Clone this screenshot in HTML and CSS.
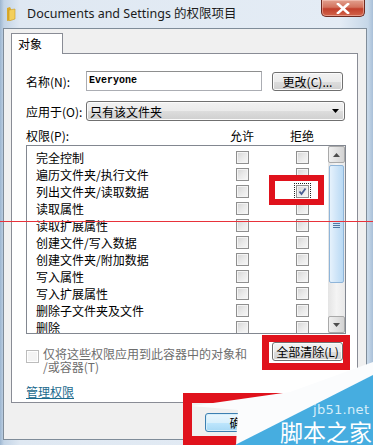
FILE: index.html
```html
<!DOCTYPE html>
<html lang="zh-CN">
<head>
<meta charset="utf-8">
<title>Documents and Settings 的权限项目</title>
<link rel="stylesheet" href="styles.css">
</head>
<body>
<div class="window">
  <div class="titlebar">
    <svg class="folder" width="10" height="14" viewBox="0 0 10 14">
      <path d="M1 1 L4 0 L5 2 L5 13 L1 14 Z" fill="#d9a92c"/>
      <path d="M3 3 L9 2 L9 12 L3 14 Z" fill="#f3cf5c" stroke="#c99a22" stroke-width="0.6"/>
    </svg>
    <span class="title">Documents and Settings 的权限项目</span>
    <div class="close">
      <svg width="14" height="11" viewBox="0 0 14 11"><path d="M2 1 L12 10 M12 1 L2 10" stroke="#fff" stroke-width="2.6" stroke-linecap="square"/></svg>
    </div>
  </div>
  <div class="client">
    <div class="tabs"><div class="tab">对象</div></div>
    <div class="panel">
      <div class="field-row">
        <span class="label">名称(N):</span>
        <div class="input">Everyone</div>
        <div class="btn change">更改(C)...</div>
      </div>
      <div class="field-row apply">
        <span class="label">应用于(O):</span>
        <div class="select"><span>只有该文件夹</span><svg width="8" height="4" viewBox="0 0 8 4"><path d="M0 0 H7 L3.5 4 Z" fill="#000"/></svg></div>
      </div>
      <div class="perm-head"><span>权限(P):</span><span>允许</span><span></span><span>拒绝</span></div>
      <div class="listbox">
        <div class="items">
          <div class="item"><span>完全控制</span><i class="cb"></i><b></b><i class="cb"></i></div>
          <div class="item"><span>遍历文件夹/执行文件</span><i class="cb"></i><b></b><i class="cb"></i></div>
          <div class="item"><span>列出文件夹/读取数据</span><i class="cb"></i><b></b><i class="cb checked focus"><svg width="11" height="11" viewBox="0 0 11 11"><path d="M2.5 5.5 L4.5 8 L8.5 2.5" fill="none" stroke="#4a5e93" stroke-width="1.8"/></svg></i></div>
          <div class="item"><span>读取属性</span><i class="cb"></i><b></b><i class="cb"></i></div>
          <div class="item"><span>读取扩展属性</span><i class="cb"></i><b></b><i class="cb"></i></div>
          <div class="item"><span>创建文件/写入数据</span><i class="cb"></i><b></b><i class="cb"></i></div>
          <div class="item"><span>创建文件夹/附加数据</span><i class="cb"></i><b></b><i class="cb"></i></div>
          <div class="item"><span>写入属性</span><i class="cb"></i><b></b><i class="cb"></i></div>
          <div class="item"><span>写入扩展属性</span><i class="cb"></i><b></b><i class="cb"></i></div>
          <div class="item"><span>删除子文件夹及文件</span><i class="cb"></i><b></b><i class="cb"></i></div>
          <div class="item"><span>删除</span><i class="cb"></i><b></b><i class="cb"></i></div>
        </div>
        <div class="scrollbar">
          <div class="sb-btn"><svg width="7" height="4" viewBox="0 0 7 4"><path d="M0 4 L3.5 0 L7 4 Z" fill="#4d4d4d"/></svg></div>
          <div class="sb-track">
            <div class="thumb"><div class="grip"><i></i><i></i><i></i><i></i></div></div>
          </div>
          <div class="sb-btn"><svg width="7" height="4" viewBox="0 0 7 4"><path d="M0 0 L3.5 4 L7 0 Z" fill="#4d4d4d"/></svg></div>
        </div>
      </div>
      <div class="apply-only">
        <i class="cb disabled"></i>
        <span class="apply-text">仅将这些权限应用到此容器中的对象和<br>/或容器(T)</span>
        <div class="btn clear">全部清除(L)</div>
      </div>
      <a class="manage" href="#">管理权限</a>
    </div>
    <div class="footer">
      <div class="btn default">确定</div>
      <div class="btn">取消</div>
    </div>
  </div>
</div>

<div class="ann ann-check"></div>
<div class="ann ann-clear"></div>
<div class="ann ann-ok"></div>
<div class="redline"></div>

<svg class="wm-shape" width="373" height="445" viewBox="0 0 373 445">
  <polygon points="192,406 290,392 373,362 373,445 236,445 238,410" fill="#fbfcfd"/>
  <polygon points="235,445 373,375 373,445" fill="#46ade0"/>
</svg>
<div class="wm-site">jb51.net</div>
<div class="wm-name">脚本之家</div>
</body>
</html>
```

FILE: styles.css
```css
html, body { margin: 0; padding: 0; }
body {
  width: 373px; height: 445px; overflow: hidden; position: relative;
  font-family: "Noto Sans CJK SC", "Noto Sans", sans-serif;
  font-size: 12px; color: #000; background: #b9cde2;
}
.window {
  width: 373px; height: 445px; box-sizing: border-box;
  display: flex; flex-direction: column;
  background: linear-gradient(90deg, #9db6d0 0, #c3d4e6 4px, #dfe8f2 20px, #e4ecf5 340px, #c6d7e8 368px, #a9c0d8 373px);
}
.titlebar { height: 28px; display: flex; align-items: flex-start; flex: none; }
.folder { margin: 7px 0 0 6px; }
.title {
  margin: 5px 0 0 11px; font-family: "Noto Sans", "Noto Sans CJK SC", sans-serif;
  font-size: 12.5px; line-height: 17px; color: #1b1b1b;
}
.close {
  margin-left: auto; margin-right: 8px; width: 44px; height: 17px; box-sizing: border-box;
  border: 1px solid #6e2a20; border-top: none; border-radius: 0 0 5px 5px;
  background: linear-gradient(180deg, #e2a08e 0, #d3735e 45%, #c2402c 55%, #d2644a 100%);
  box-shadow: inset 0 0 0 1px rgba(255,220,210,.45);
  display: flex; align-items: center; justify-content: center;
}
.client {
  flex: 1; margin: 0 6px 5px 3px; border: 1px solid #7f8c99;
  background: #f0f0f0; padding: 4px 8px 0 7px; display: flex; flex-direction: column;
}
.tabs { display: flex; height: 20px; }
.tab {
  position: relative; z-index: 1; width: 52px; height: 21px; box-sizing: border-box;
  border: 1px solid #898c95; border-bottom: none; background: #fff;
  padding-left: 6px; line-height: 19px; font-size: 12px;
}
.panel {
  height: 350px; box-sizing: border-box; border: 1px solid #898c95; background: #fff;
  padding: 17px 12px 0 14px; display: flex; flex-direction: column;
}
.field-row { display: flex; align-items: center; height: 20px; }
.field-row.apply { margin-top: 10px; }
.label { width: 60px; flex: none; white-space: nowrap; }
.input {
  width: 176px; height: 20px; box-sizing: border-box; border: 1px solid #abadb3;
  border-top-color: #8e8f8f; padding-left: 2px; line-height: 18px;
  font-family: "Liberation Mono", monospace; font-size: 10px; font-weight: bold;
}
.btn {
  height: 19px; box-sizing: border-box; border: 1px solid #707070; border-radius: 3px;
  background: linear-gradient(180deg, #f2f2f2 0, #ebebeb 50%, #dddddd 51%, #cfcfcf 100%);
  box-shadow: inset 0 0 0 1px #fbfbfb; display: flex; align-items: center; justify-content: center;
  font-size: 12px; white-space: nowrap;
}
.btn.change { width: 71px; margin-left: 10px; }
.select {
  width: 259px; height: 20px; box-sizing: border-box; border: 1px solid #707070; border-radius: 3px;
  background: linear-gradient(180deg, #f2f2f2 0, #ebebeb 50%, #dddddd 51%, #cfcfcf 100%);
  box-shadow: inset 0 0 0 1px #fbfbfb; display: flex; align-items: center; justify-content: space-between;
  padding: 0 4px 0 3px; font-size: 12px;
}
.perm-head {
  display: grid; grid-template-columns: 204px 24px 36px 24px; margin-top: 8px;
  line-height: 14px; height: 14px;
}
.listbox {
  margin-top: 2px; width: 320px; height: 189px; box-sizing: border-box;
  border: 1px solid #828790; display: flex; overflow: hidden; background: #fff;
}
.items { flex: 1; padding: 3px 0 0 9px; overflow: hidden; }
.item {
  height: 17px; display: grid; grid-template-columns: 200px 13px 47px 13px;
  align-items: center; line-height: 17px; white-space: nowrap;
}
.cb {
  display: block; width: 13px; height: 13px; box-sizing: border-box; position: relative;
  border: 1px solid #8f8f8f;
  background: linear-gradient(135deg, #d4d4d4 0, #e9e9e9 50%, #f8f8f8 100%);
  box-shadow: inset 0 0 0 1px #f4f4f4;
}
.cb svg { position: absolute; left: 0; top: 0; }
.cb.focus { outline: 1px dotted #222; outline-offset: 1px; }
.cb.disabled { border-color: #bcbcbc; background: #f4f4f4; box-shadow: inset 0 0 0 1px #fff; }
.scrollbar {
  width: 17px; flex: none; display: flex; flex-direction: column;
  background: linear-gradient(90deg, #e4e4e4, #f4f4f4 50%, #e9e9e9);
}
.sb-btn {
  height: 17px; box-sizing: border-box; border: 1px solid #a9a9a9; border-radius: 2px;
  background: linear-gradient(90deg, #f0f0f0, #e2e2e2 50%, #d3d3d3);
  display: flex; align-items: center; justify-content: center; flex: none;
}
.sb-track { flex: 1; padding-top: 2px; }
.thumb {
  height: 118px; box-sizing: border-box; margin: 0 1px; border: 1px solid #8fb5d9; border-radius: 2px;
  background: linear-gradient(90deg, #e6f2fc, #cfe5f8 50%, #b9daf4);
  display: flex; align-items: center; justify-content: center;
}
.grip { display: flex; flex-direction: column; gap: 1px; }
.grip i { display: block; width: 7px; height: 1px; background: #4f78a3; }
.apply-only { display: flex; align-items: flex-start; margin-top: 8px; }
.apply-only .cb { margin-top: 8px; }
.apply-text { margin: 5px 0 0 4px; line-height: 13px; color: #6d6d6d; white-space: nowrap; }
.btn.clear { width: 71px; margin-left: auto; margin-right: 2px; }
.manage {
  margin-top: 12px; line-height: 13px; color: #1b6a8d; text-decoration: underline;
  align-self: flex-start;
}
.footer { display: flex; justify-content: flex-end; gap: 7px; padding: 10px 8px 0 0; margin-right: -8px; }
.footer .btn { width: 73px; }
.footer .btn.default {
  border-color: #3c7fb1;
  background: linear-gradient(180deg, #eaf6fd 0, #d9f0fc 50%, #bee6fd 51%, #a7d9f5 100%);
  box-shadow: inset 0 0 0 1px #d6eefa;
}
.ann { position: absolute; box-sizing: border-box; border: solid #e0121c; }
.ann-check { left: 269px; top: 175px; width: 55px; height: 30px; border-width: 6px; }
.ann-clear { left: 262px; top: 335px; width: 88px; height: 35px; border-width: 7px; }
.ann-ok { left: 183px; top: 393px; width: 130px; height: 52px; border-width: 10px 9px 9px 9px; }
.redline { position: absolute; left: 0; top: 221px; width: 373px; height: 1px; background: #e8323a; }
.wm-shape { position: absolute; left: 0; top: 0; }
.wm-site {
  position: absolute; left: 313px; top: 402px; font-family: "DejaVu Sans", sans-serif;
  font-size: 13px; line-height: 15px; color: #d6eef9; letter-spacing: 0.3px;
}
.wm-name {
  position: absolute; left: 280px; top: 419px; font-family: "Noto Sans CJK SC", sans-serif;
  font-size: 23px; line-height: 25px; color: #ffffff;
}
```
